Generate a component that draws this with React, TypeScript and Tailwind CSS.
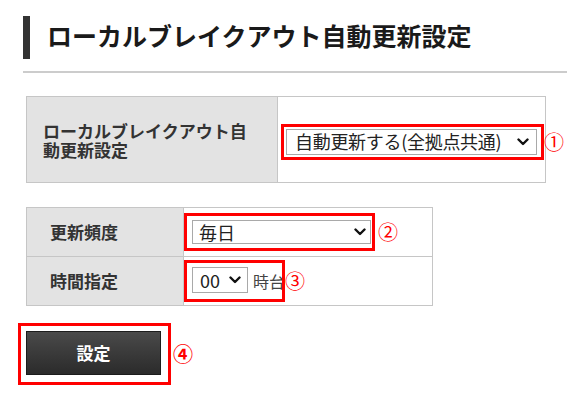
import React from 'react';

const font = { fontFamily: '"Noto Sans CJK JP", "Noto Sans", sans-serif' };

const Chevron: React.FC<{ className?: string }> = ({ className }) => (
    <svg viewBox="0 0 12 8" className={className} fill="none" stroke="#111" strokeWidth="2.4" strokeLinecap="round" strokeLinejoin="round">
        <path d="M1.5 1.5 L6 6 L10.5 1.5" />
    </svg>
);

const Mark: React.FC<{ n: string; className?: string }> = ({ n, className }) => (
    <span className={`text-[20px] leading-none text-[#f00] ${className ?? ''}`}>{n}</span>
);

export default function App() {
    return (
        <div className="min-h-[397px] w-[582px] bg-white pl-[23px] pr-[15px] pt-[16px] text-[#222]" style={font}>
            <div className="flex h-[43px] items-center border-l-[7px] border-[#333] pl-[17px] text-[25px] font-bold text-[#1a1a1a]">
                <span className="mt-[-3px]">ローカルブレイクアウト自動更新設定</span>
            </div>
            <div className="mt-[12px] h-[2px] bg-[#cccccc]" />

            {/* 自動更新設定 */}
            <table className="ml-[3px] mt-[23px] w-[520px] border-collapse text-[17px]">
                <tbody>
                    <tr className="h-[86px]">
                        <th className="w-[251px] border border-[#c6c6c6] bg-[#e3e3e3] pl-[16px] pr-[20px] text-left align-middle font-bold leading-[19px] text-[#333]">
                            ローカルブレイクアウト自動更新設定
                        </th>
                        <td className="border border-[#c6c6c6] pl-[3px] pt-[4px] align-middle">
                            <div className="relative w-[263px] border-[3px] border-[#f00] p-[2px] pr-[4px]">
                                <div className="flex h-[26px] items-center border border-[#a9a9a9] bg-white pl-[8px] pr-[7px] text-[18px] text-[#222]">
                                    <span className="tracking-[-0.3px]">自動更新する(全拠点共通)</span>
                                    <Chevron className="ml-auto h-[8px] w-[12px]" />
                                </div>
                                <Mark n="①" className="absolute left-full top-1/2 ml-[3px] -translate-y-1/2" />
                            </div>
                        </td>
                    </tr>
                </tbody>
            </table>

            {/* 更新頻度・時間指定 */}
            <table className="ml-[3px] mt-[24px] w-[407px] border-collapse text-[17px]">
                <tbody>
                    <tr className="h-[49px]">
                        <th className="w-[157px] border border-[#c6c6c6] bg-[#e3e3e3] pl-[23px] text-left font-bold text-[#333]">
                            更新頻度
                        </th>
                        <td className="border border-[#c6c6c6] p-0">
                            <div className="flex items-center">
                                <div className="w-[191px] border-[3px] border-[#f00] py-[4px] pl-[5px] pr-[1px]">
                                    <div className="flex h-[24px] items-center justify-between border border-[#a9a9a9] bg-white pl-[6px] pr-[4px] text-[18px] text-[#222]">
                                        <span>毎日</span>
                                        <Chevron className="h-[8px] w-[12px]" />
                                    </div>
                                </div>
                                <Mark n="②" className="ml-[3px]" />
                            </div>
                        </td>
                    </tr>
                    <tr className="h-[49px]">
                        <th className="border border-[#c6c6c6] bg-[#e3e3e3] pl-[23px] text-left font-bold text-[#333]">
                            時間指定
                        </th>
                        <td className="border border-[#c6c6c6] p-0">
                            <div className="relative flex h-[42px] items-center pl-[8px]">
                                <div className="mt-[-2px] flex h-[26px] w-[56px] items-center justify-between border border-[#a9a9a9] bg-white pl-[7px] pr-[6px] text-[#222]">
                                    <span className="text-[18px]">00</span>
                                    <Chevron className="h-[8px] w-[12px]" />
                                </div>
                                <span className="ml-[5px] text-[16px] text-[#444]">時台</span>
                                <Mark n="③" className="ml-[0px]" />
                                <div className="pointer-events-none absolute left-0 top-0 h-[42px] w-[101px] border-[3px] border-[#f00]" />
                            </div>
                        </td>
                    </tr>
                </tbody>
            </table>

            {/* 設定ボタン */}
            <div className="ml-[-5px] mt-[17px] flex items-center">
                <div className="border-[3px] border-[#f00] pb-[7px] pl-[5px] pr-[7px] pt-[5px]">
                    <button className="flex h-[44px] w-[135px] items-center justify-center border border-[#1c1c1c] bg-gradient-to-b from-[#4a4a4a] to-[#2b2b2b] text-[17px] font-bold text-white">
                        設定
                    </button>
                </div>
                <Mark n="④" className="ml-[2px] font-bold" />
            </div>
        </div>
    );
}
